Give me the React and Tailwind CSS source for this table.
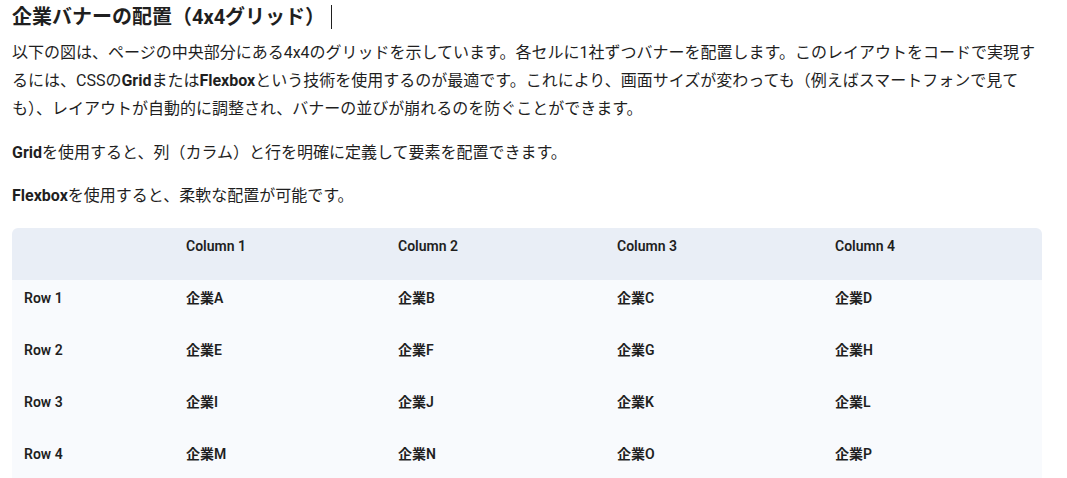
const rows = [
  ['Row 1', '企業A', '企業B', '企業C', '企業D'],
  ['Row 2', '企業E', '企業F', '企業G', '企業H'],
  ['Row 3', '企業I', '企業J', '企業K', '企業L'],
  ['Row 4', '企業M', '企業N', '企業O', '企業P'],
];

const widths = ['w-[162px]', 'w-[212px]', 'w-[219px]', 'w-[218px]', 'w-[219px]'];

export default function App() {
  return (
    <div className="min-h-[478px] bg-white text-[#1f1f1f] font-['Roboto','Noto_Sans_CJK_JP',sans-serif]">
      <div className="w-[1030px] ml-[12px] pt-[3px]">
        {/* Heading */}
        <div className="flex items-center h-[28px]">
          <h2 className="text-[20px] font-bold leading-[28px]">企業バナーの配置（4x4グリッド）</h2>
          <span className="ml-[6px] w-px h-[24px] bg-[#1f1f1f]" />
        </div>

        <p className="mt-[8px] text-[16px] leading-[28px]">
          以下の図は、ページの中央部分にある4x4のグリッドを示しています。各セルに1社ずつバナーを配置します。このレイアウトをコードで実現するには、CSSの<b>Grid</b>または<b>Flexbox</b>という技術を使用するのが最適です。これにより、画面サイズが変わっても（例えばスマートフォンで見ても）、レイアウトが自動的に調整され、バナーの並びが崩れるのを防ぐことができます。
        </p>

        <p className="mt-[16px] text-[16px] leading-[28px]">
          <b>Grid</b>を使用すると、列（カラム）と行を明確に定義して要素を配置できます。
        </p>

        <p className="mt-[15px] text-[16px] leading-[28px]">
          <b>Flexbox</b>を使用すると、柔軟な配置が可能です。
        </p>

        {/* Table */}
        <div className="mt-[18px] rounded-t-[6px] overflow-hidden text-[14px] font-semibold">
          <div className="flex h-[52px] bg-[#e9eef6]">
            {['', 'Column 1', 'Column 2', 'Column 3', 'Column 4'].map((h, i) => (
              <div key={i} className={`${widths[i]} pl-[12px] pt-[8px] leading-[20px]`}>{h}</div>
            ))}
          </div>
          {rows.map((r) => (
            <div key={r[0]} className="flex h-[52px] bg-[#f8fafd]">
              {r.map((c, i) => (
                <div key={i} className={`${widths[i]} pl-[12px] pt-[8px] leading-[20px]`}>{c}</div>
              ))}
            </div>
          ))}
        </div>
      </div>
    </div>
  );
}
